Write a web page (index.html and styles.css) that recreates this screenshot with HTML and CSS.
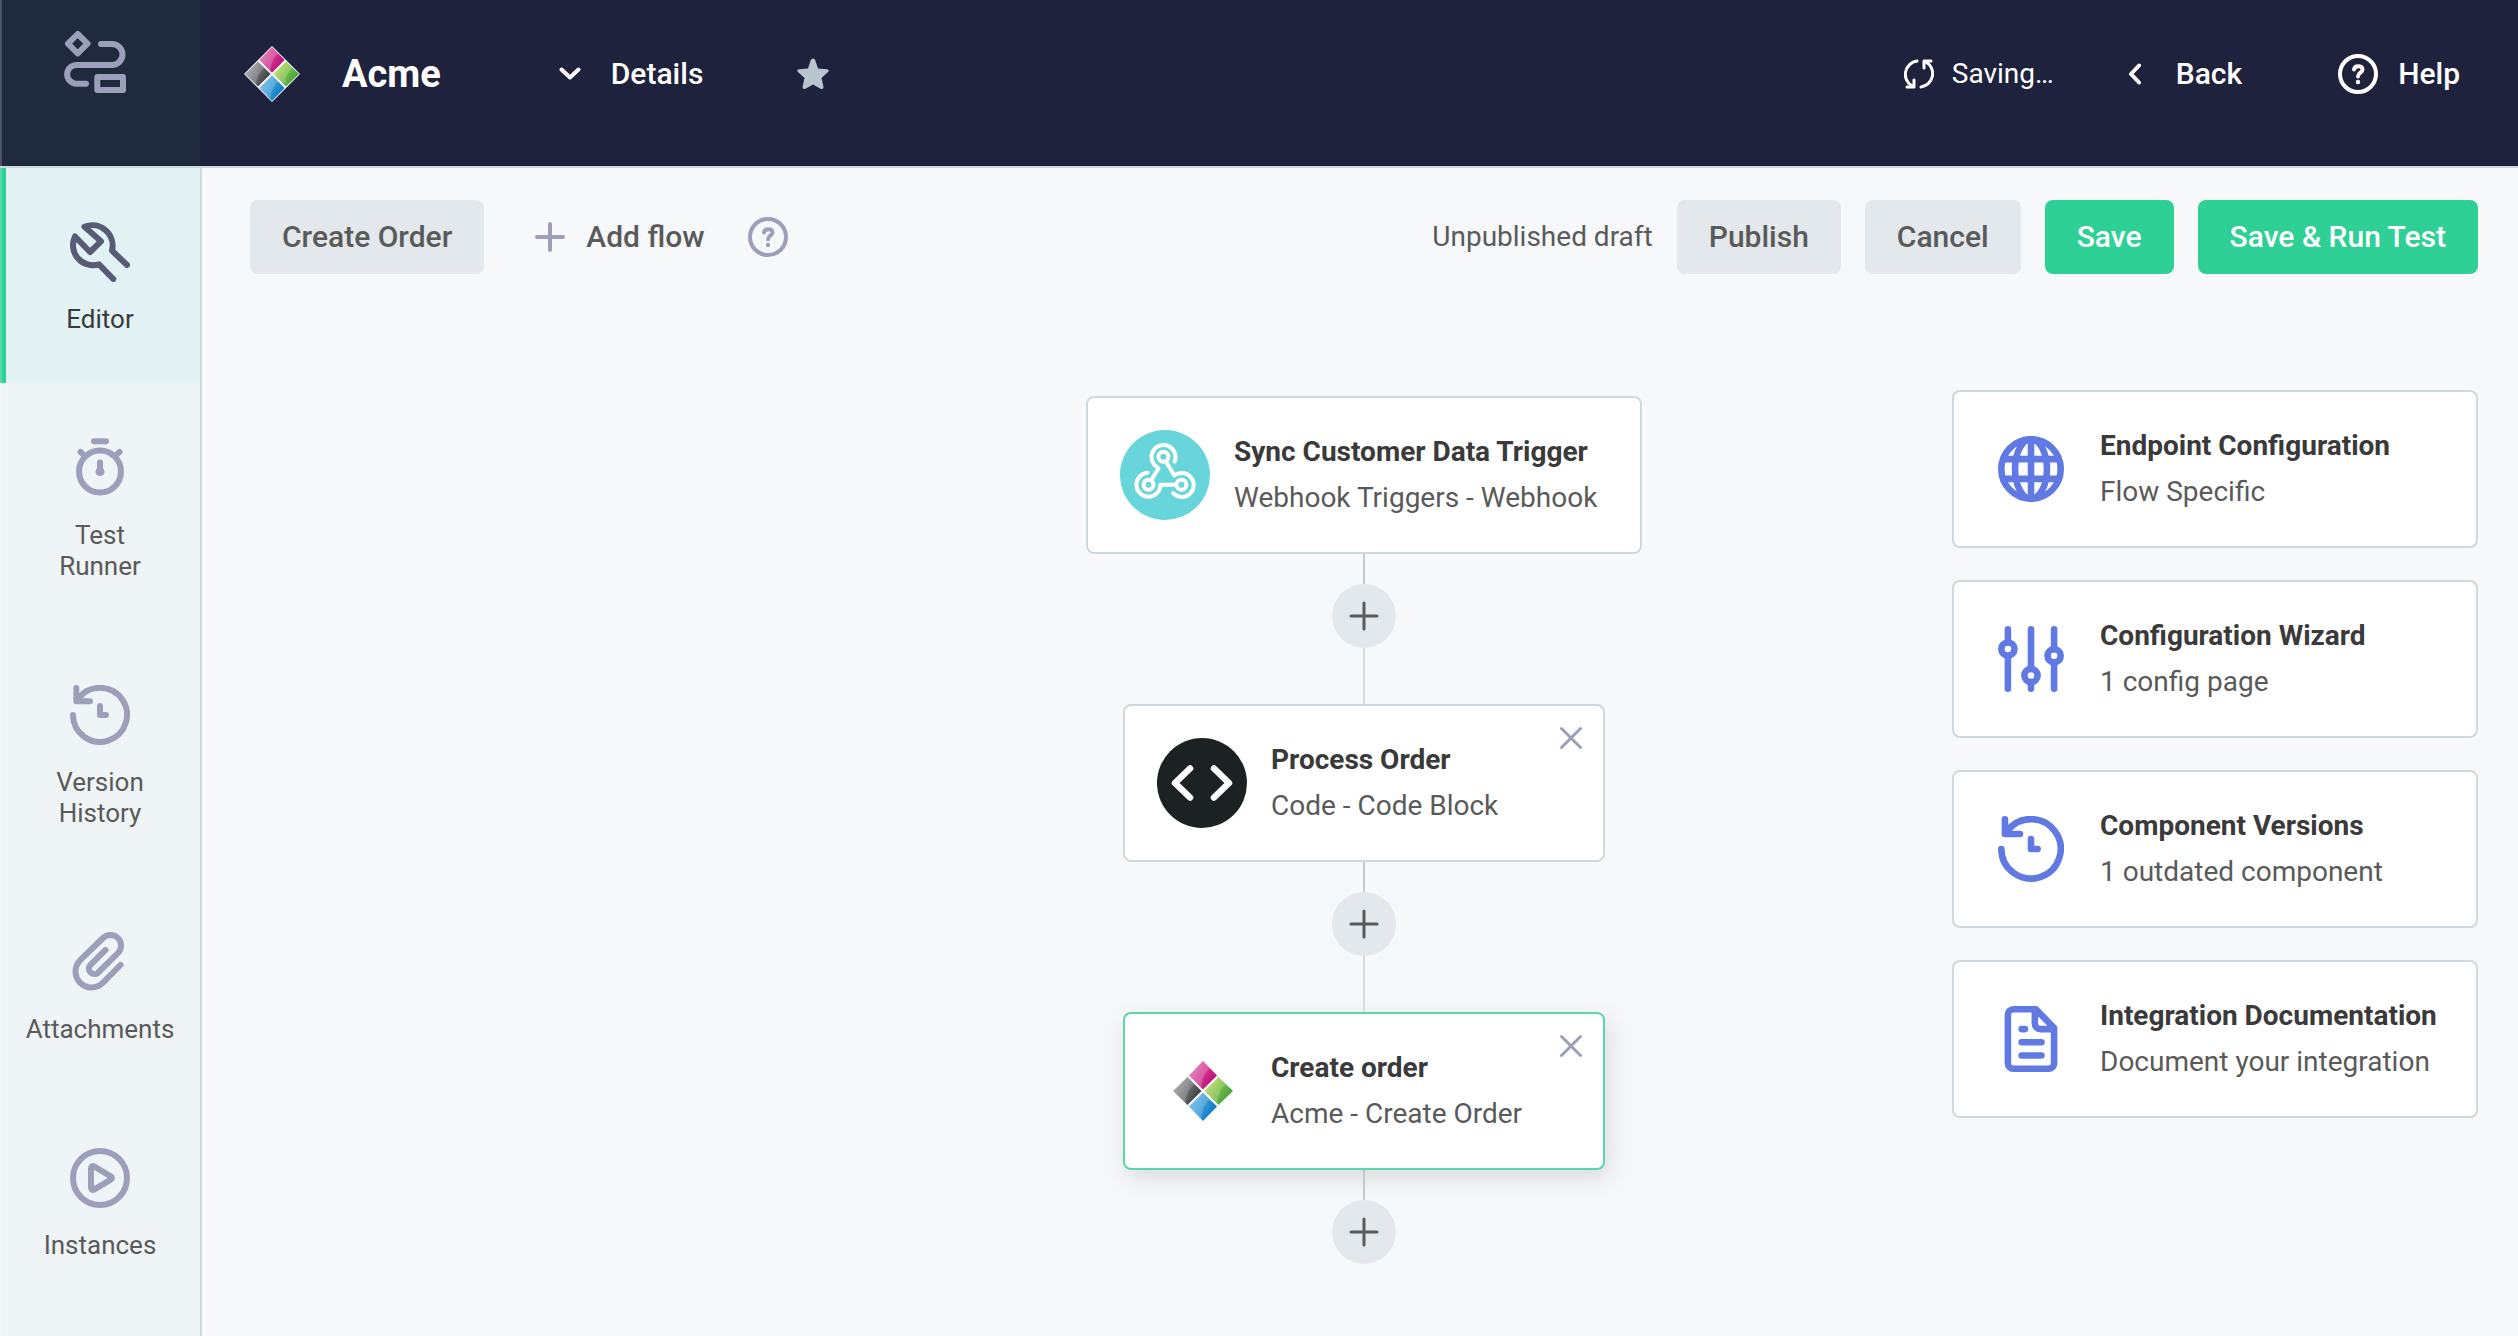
FILE: index.html
```html
<!DOCTYPE html>
<html lang="en">
<head>
<meta charset="utf-8">
<meta name="viewport" content="width=device-width, initial-scale=1">
<title>Acme - Editor</title>
<link rel="stylesheet" href="styles.css">
</head>
<body>
<svg class="sprite" width="0" height="0" aria-hidden="true">
  <defs>
    <linearGradient id="pink" x1="0" y1="0.2" x2="1" y2="0.8"><stop offset="0" stop-color="#e667ae"/><stop offset="1" stop-color="#b8006f"/></linearGradient>
    <linearGradient id="gray" x1="0" y1="0.2" x2="1" y2="0.8"><stop offset="0" stop-color="#a4a5a7"/><stop offset="1" stop-color="#2e2f31"/></linearGradient>
    <linearGradient id="green" x1="0" y1="0.2" x2="1" y2="0.8"><stop offset="0" stop-color="#c3dc4f"/><stop offset="1" stop-color="#2c9a3c"/></linearGradient>
    <linearGradient id="blue" x1="0" y1="0.2" x2="1" y2="0.8"><stop offset="0" stop-color="#62b9ea"/><stop offset="1" stop-color="#0072bd"/></linearGradient>
    <symbol id="acme" viewBox="0 0 60 60">
      <path fill="url(#pink)" d="M30 0 44 14.5 30 28.5 16 14.5Z"/>
      <path fill="url(#gray)" d="M14.5 16 28.5 30 14.5 44 0 30Z"/>
      <path fill="url(#green)" d="M45.500 16 60 30 45.500 44 31.500 30Z"/>
      <path fill="url(#blue)" d="M30 31.500 44 45.500 30 60 16 45.500Z"/>
      <path fill="#fff" opacity=".2" d="M30 0 37 7Q29 14 28 26.500L16 14.500ZM14.500 16 21.500 23Q13 30 12.500 42L0 30ZM45.500 16 52.500 23Q45 30 44 42.500L31.500 30ZM30 31.500 37 38.500Q29 45 28 58L16 45.500Z"/>
    </symbol>
    <symbol id="history" viewBox="0 0 60 60">
      <path d="M3 30A27 27 0 1 0 8.500 13.500M6.300 3V16.300H20M30 21V30H36"/>
    </symbol>
    <symbol id="help" viewBox="0 0 40 40">
      <circle cx="20" cy="20" r="18"/>
      <path d="M16 15.500C16.500 11 24.500 11 24.500 15.500C24.500 19 20 18.500 20 22.500"/>
      <circle class="dot" cx="20" cy="28" r="2.200"/>
    </symbol>
    <symbol id="plus" viewBox="0 0 32 32"><path d="M16 3V29M3 16H29"/></symbol>
    <symbol id="close" viewBox="0 0 24 24"><path d="M2.500 2.500 21.500 21.500M21.500 2.500 2.500 21.500"/></symbol>
  </defs>
</svg>

<header class="topbar">
  <a class="brand" href="#home" aria-label="Home">
    <svg class="line-icon" width="62" height="63" viewBox="0 0 62 63"><path d="M13.700 4 23.500 13.700 13.700 23.500 4 13.700ZM37 14H48A10.500 10.500 0 0 1 48 35H12.500A9.300 9.300 0 0 0 12.500 53.700H22M33.300 47H59V60H33.300Z"/></svg>
  </a>
  <div class="topbar-main">
    <svg class="app-logo" width="56" height="56" viewBox="0 0 56 56"><path fill="#fff" d="M28 0 56 28 28 56 0 28Z"/><use href="#acme" x="1" y="1" width="54" height="54"/></svg>
    <h1 class="app-name">Acme</h1>
    <button class="top-action details" type="button">
      <svg class="line-icon heavy" width="22" height="14" viewBox="0 0 22 14"><path d="M2.500 2.500 11 10.500 19.500 2.500"/></svg>
      Details
    </button>
    <button class="star" type="button" aria-label="Favorite">
      <svg width="32" height="32" viewBox="0 0 32 32"><path d="M16 0.500Q17.500 0.500 18.200 2L21 10.500 30 11.200Q33 12 31 14L24.500 20 26.500 29Q26.500 31.500 24 31L16 26.500 8 31Q5.500 31.500 5.500 29L7.500 20 1 14Q-1 12 2 11.200L11 10.500 13.800 2Q14.500 0.500 16 0.500Z"/></svg>
    </button>
    <div class="status">
      <svg class="line-icon" width="30" height="30" viewBox="0 0 30 30"><path d="M13 2A13.500 13.500 0 0 0 8 27M10 21V28H3M17 28A13.500 13.500 0 0 0 22 3M27 2H20V9"/></svg>
      Saving…
    </div>
    <a class="top-action back" href="#back">
      <svg class="line-icon heavy" width="14" height="22" viewBox="0 0 14 22"><path d="M11 2.500 3 11 11 19.500"/></svg>
      Back
    </a>
    <button class="top-action help" type="button">
      <svg class="line-icon heavy" width="40" height="40"><use href="#help"/></svg>
      Help
    </button>
  </div>
</header>

<div class="workspace">
  <nav class="sidebar" aria-label="Integration">
    <a class="nav-item active" href="#editor" aria-current="page">
      <svg class="nav-icon" width="60" height="60" viewBox="0 0 60 60"><path d="M43.300 57 29 42.300A20 20 0 0 1 5 14.500L20 30 31 19.300 14.500 4.700A20.500 20.500 0 0 1 42 28.700L57 43"/></svg>
      <span>Editor</span>
    </a>
    <a class="nav-item" href="#test">
      <svg class="nav-icon" width="60" height="60" viewBox="0 0 60 60"><path d="M24 3.300H36M10.500 14 14 17M49.500 14 46 17M30 24.500V33"/><circle cx="30" cy="33.600" r="21"/><circle cx="30" cy="33.600" r="1.500"/></svg>
      <span>Test<br>Runner</span>
    </a>
    <a class="nav-item" href="#versions">
      <svg class="nav-icon" width="60" height="60"><use href="#history"/></svg>
      <span>Version<br>History</span>
    </a>
    <a class="nav-item" href="#attachments">
      <svg class="nav-icon" width="60" height="60" viewBox="0 0 60 60"><path d="M50.500 33 32.300 51.300A16 16 0 0 1 9.700 28.700L33 6A10.500 10.500 0 0 1 48 21L27.700 41A5.500 5.500 0 0 1 20 33.300L35.500 18"/></svg>
      <span>Attachments</span>
    </a>
    <a class="nav-item" href="#instances">
      <svg class="nav-icon" width="60" height="60" viewBox="0 0 60 60"><circle cx="30" cy="30" r="27"/><path d="M21 20.400C21 18.400 22.500 17.600 24 18.400L41 28.500C42.300 29.300 42.300 30.700 41 31.500L24 41.600C22.500 42.400 21 41.600 21 39.600Z"/></svg>
      <span>Instances</span>
    </a>
  </nav>

  <main class="editor">
    <div class="toolbar">
      <button class="btn" type="button">Create Order</button>
      <button class="add-flow" type="button">
        <svg class="line-icon" width="32" height="32"><use href="#plus"/></svg>
        Add flow
      </button>
      <button class="flow-help" type="button" aria-label="About flows">
        <svg class="line-icon heavy" width="40" height="40"><use href="#help"/></svg>
      </button>
      <div class="toolbar-actions">
        <span class="draft">Unpublished draft</span>
        <button class="btn" type="button">Publish</button>
        <button class="btn" type="button">Cancel</button>
        <button class="btn primary" type="button">Save</button>
        <button class="btn primary" type="button">Save &amp; Run Test</button>
      </div>
    </div>

    <div class="canvas">
      <section class="flow" aria-label="Flow steps">
        <article class="card step trigger">
          <svg class="step-icon" viewBox="0 0 90 90"><circle cx="45" cy="45" r="45" fill="#67d5da"/><g fill="none" stroke="#fff" stroke-width="4" stroke-linejoin="round"><circle cx="43.400" cy="26.700" r="5"/><circle cx="28.500" cy="54.700" r="5"/><circle cx="61.400" cy="54.700" r="5"/><g stroke-linecap="round"><path d="M54.600 31.500A12 12 0 1 0 37.400 37.300L38.500 38.500 31 50.500M46 31.500 54.300 45.500A12 12 0 1 1 53 63.200M27.500 42.800A12 12 0 1 0 40.400 54.700H56"/></g></g></svg>
          <div class="card-text">
            <h2>Sync Customer Data Trigger</h2>
            <p>Webhook Triggers - Webhook</p>
          </div>
        </article>
        <div class="connector"></div>
        <button class="add-step" type="button" aria-label="Add step"><svg class="line-icon" width="32" height="32"><use href="#plus"/></svg></button>
        <div class="connector long"></div>

        <article class="card step">
          <svg class="step-icon" viewBox="0 0 90 90"><circle cx="45" cy="45" r="45" fill="#1c2222"/><path d="M33 30.500 18 45 33 59.500M57 30.500 72 45 57 59.500" fill="none" stroke="#fff" stroke-width="6.500" stroke-linecap="round" stroke-linejoin="round"/></svg>
          <div class="card-text">
            <h2>Process Order</h2>
            <p>Code - Code Block</p>
          </div>
          <button class="remove" type="button" aria-label="Remove step"><svg class="line-icon" width="24" height="24"><use href="#close"/></svg></button>
        </article>
        <div class="connector"></div>
        <button class="add-step" type="button" aria-label="Add step"><svg class="line-icon" width="32" height="32"><use href="#plus"/></svg></button>
        <div class="connector long"></div>

        <article class="card step selected">
          <svg class="step-icon" viewBox="0 0 90 90"><use href="#acme" x="16" y="15" width="60" height="60"/></svg>
          <div class="card-text">
            <h2>Create order</h2>
            <p>Acme - Create Order</p>
          </div>
          <button class="remove" type="button" aria-label="Remove step"><svg class="line-icon" width="24" height="24"><use href="#close"/></svg></button>
        </article>
        <div class="connector"></div>
        <button class="add-step" type="button" aria-label="Add step"><svg class="line-icon" width="32" height="32"><use href="#plus"/></svg></button>
      </section>

      <aside class="panel" aria-label="Configuration">
        <a class="card config" href="#endpoint">
          <svg class="config-icon" viewBox="0 0 60 60"><circle cx="30" cy="30" r="27"/><ellipse cx="30" cy="30" rx="14.500" ry="27"/><path d="M30 3V57M5 21H55M5 39H55"/></svg>
          <div class="card-text">
            <h2>Endpoint Configuration</h2>
            <p>Flow Specific</p>
          </div>
        </a>
        <a class="card config" href="#wizard">
          <svg class="config-icon" viewBox="0 0 60 60"><path d="M9 3V15M9 27V57M30 3V39M30 51V57M51 3V21M51 33V57"/><circle cx="9" cy="21" r="6"/><circle cx="30" cy="45" r="6"/><circle cx="51" cy="27" r="6"/></svg>
          <div class="card-text">
            <h2>Configuration Wizard</h2>
            <p>1 config page</p>
          </div>
        </a>
        <a class="card config" href="#components">
          <svg class="config-icon"><use href="#history"/></svg>
          <div class="card-text">
            <h2>Component Versions</h2>
            <p>1 outdated component</p>
          </div>
        </a>
        <a class="card config" href="#documentation">
          <svg class="config-icon" viewBox="0 0 60 60"><path d="M33.500 3H14A5 5 0 0 0 9 8V52A5 5 0 0 0 14 57H46A5 5 0 0 0 51 52V20L34.500 3ZM33.500 3V16A5 5 0 0 0 38.500 21H51M21.500 21H24.500M21.500 33H39.500M21.500 45H39.500"/></svg>
          <div class="card-text">
            <h2>Integration Documentation</h2>
            <p>Document your integration</p>
          </div>
        </a>
      </aside>
    </div>
  </main>
</div>
</body>
</html>
```
FILE: styles.css
```css
*, *::before, *::after { box-sizing: border-box; }

body {
  display: flex;
  flex-direction: column;
  min-height: 100vh;
  margin: 0;
  background: #f7f8fa;
  color: #5a5a5a;
  font: 28px/46px Roboto, sans-serif;
}

h1, h2, p { margin: 0; }
a { color: inherit; text-decoration: none; }
button {
  padding: 0;
  border: 0;
  background: none;
  color: inherit;
  font: inherit;
  cursor: pointer;
}
svg { display: block; flex: none; }
.sprite { position: absolute; }

.line-icon, .nav-icon, .config-icon {
  fill: none;
  stroke: currentColor;
  stroke-width: 3;
  stroke-linecap: round;
  stroke-linejoin: round;
}
.line-icon.heavy { stroke-width: 4; }
.dot { fill: currentColor; stroke: none; }

/* Top bar */
.topbar {
  display: flex;
  min-height: 168px;
  border-bottom: 2px solid #ced8df;
  background: #1f223c;
  color: #fff;
}
.brand {
  display: flex;
  justify-content: center;
  width: 200px;
  padding: 30px 12px 0 0;
  border-left: 2px solid #4c5464;
  background: #1f2a3d;
  color: #9b9fba;
}
.brand .line-icon { stroke-width: 6; }
.topbar-main {
  display: flex;
  flex: 1;
  align-items: center;
  padding: 0 58px 18px 44px;
}
.app-name {
  margin-left: 42px;
  font-size: 38px;
  font-weight: 700;
}
.top-action {
  display: flex;
  align-items: center;
  font-size: 30px;
  font-weight: 500;
}
.details { gap: 30px; margin-left: 118px; }
.star { margin-left: 94px; fill: #b9c5cd; }
.status {
  display: flex;
  align-items: center;
  gap: 18px;
  margin-left: auto;
}
.back { gap: 34px; margin-left: 74px; }
.help { gap: 20px; margin-left: 96px; }

/* Sidebar */
.workspace { display: flex; flex: 1; }
.sidebar {
  position: relative;
  display: flex;
  flex-direction: column;
  gap: 1px;
  width: 202px;
  border-right: 2px solid #ced8df;
  background: #eff4f6;
}
.sidebar::after {
  content: "";
  position: absolute;
  inset: 0 auto 0 0;
  width: 2px;
  background: rgba(255, 255, 255, 0.2);
}
.nav-item {
  display: flex;
  flex-direction: column;
  align-items: center;
  gap: 22px;
  padding: 54px 0 48px;
  font-size: 26px;
  line-height: 31px;
  text-align: center;
}
.nav-item.active {
  background: #e1f1f4;
  box-shadow: inset 6px 0 #2fd096;
  color: #3a3a3a;
}
.nav-icon { color: #9b9fba; stroke-width: 6; }
.active .nav-icon { color: #575b75; }

/* Editor */
.editor { flex: 1; padding: 32px 40px 32px 48px; }
.toolbar { display: flex; align-items: center; }
.btn {
  height: 74px;
  padding: 0 32px;
  border-radius: 8px;
  background: #e2e8ec;
  font-size: 30px;
  font-weight: 500;
}
.btn.primary { background: #2fd096; color: #fff; }
.add-flow {
  display: flex;
  align-items: center;
  gap: 20px;
  margin-left: 50px;
  font-size: 30px;
  font-weight: 500;
}
.add-flow .line-icon, .flow-help, .remove { color: #9b9fba; }
.add-flow .line-icon { stroke-width: 4; }
.flow-help { margin-left: 44px; }
.toolbar-actions {
  display: flex;
  align-items: center;
  gap: 24px;
  margin-left: auto;
}

.canvas {
  display: grid;
  grid-template-columns: 1fr auto 1fr;
  align-items: start;
  padding-top: 116px;
}
.flow {
  grid-column: 2;
  display: flex;
  flex-direction: column;
  align-items: center;
  padding-top: 6px;
}
.panel {
  display: flex;
  flex-direction: column;
  justify-self: end;
  gap: 32px;
  width: 526px;
}

/* Cards */
.card {
  display: flex;
  align-items: center;
  min-height: 158px;
  border: 2px solid #ced8df;
  border-radius: 8px;
  background: #fff;
}
.card h2 {
  color: #3a3a3a;
  font-size: 28px;
  font-weight: 700;
}
.step {
  position: relative;
  gap: 24px;
  min-width: 482px;
  padding: 0 32px;
}
.step.trigger { min-width: 556px; }
.step.selected {
  border-color: #5bd6ab;
  box-shadow: 4px 8px 24px rgba(0, 0, 0, 0.12);
}
.step-icon { width: 90px; height: 90px; }
.remove {
  position: absolute;
  top: 10px;
  right: 10px;
  display: grid;
  place-items: center;
  width: 44px;
  height: 44px;
}
.config { gap: 36px; padding: 0 36px 0 44px; }
.config-icon {
  width: 66px;
  height: 66px;
  color: #6079e3;
  stroke-width: 6;
}

.connector {
  z-index: 1;
  width: 2px;
  height: 30px;
  background: #c0cbd5;
}
.connector.long { height: 56px; background: #d3dbe2; }
.add-step {
  z-index: 1;
  display: grid;
  place-items: center;
  width: 64px;
  height: 64px;
  border-radius: 50%;
  background: #e2e8ec;
}
```
